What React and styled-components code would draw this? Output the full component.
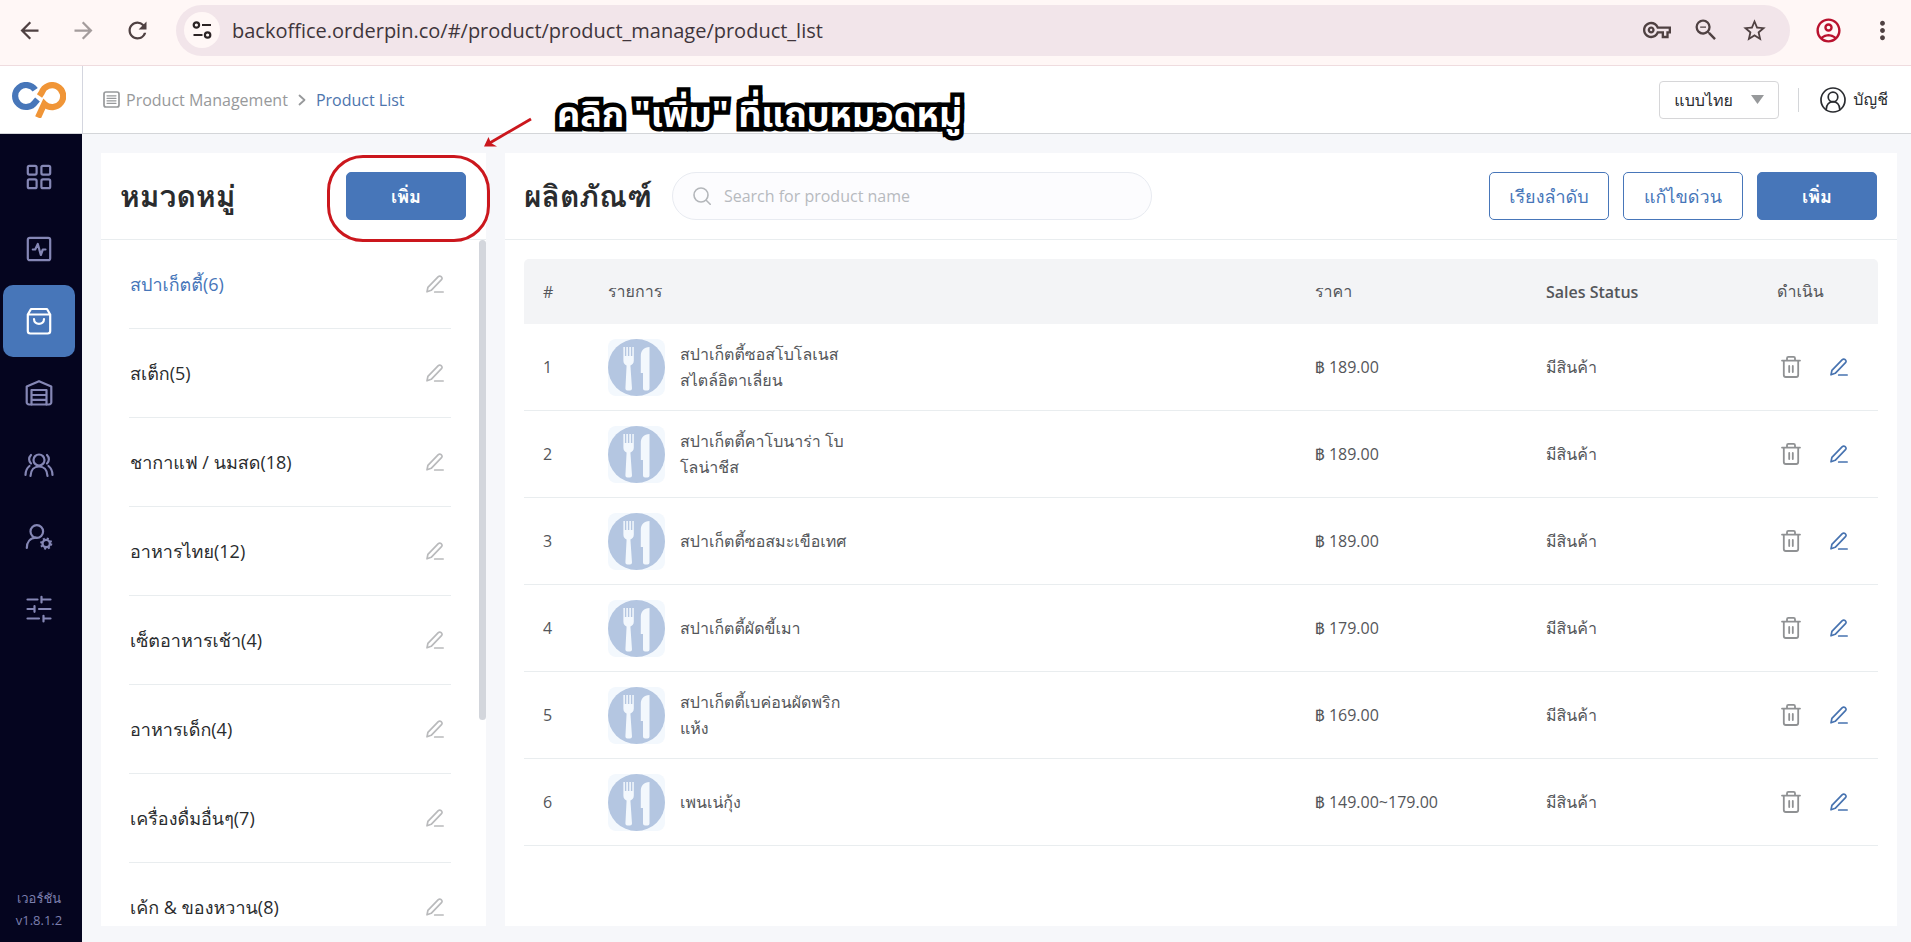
import React from 'react';
import styled, { createGlobalStyle, css } from 'styled-components';
import {
  MdArrowBack, MdArrowForward, MdRefresh, MdOutlineVpnKey, MdZoomOut,
  MdStarOutline, MdOutlineAccountCircle, MdMoreVert,
} from 'react-icons/md';

const BLUE = '#4776b9';
const LINE = '#e9edef';

const GlobalStyle = createGlobalStyle`
  *, *::before, *::after { box-sizing: border-box; }
  body {
    margin: 0;
    font-family: "Open Sans", Loma, "Noto Sans Thai Looped", sans-serif;
    font-size: 16px;
    color: #54565a;
  }
  button, input, select { font: inherit; color: inherit; }
  button { cursor: pointer; }
  h1, h2, p, ul { margin: 0; padding: 0; }
  ul { list-style: none; }
  svg { display: block; flex: none; }
`;

const Page = styled.div`
  display: flex;
  flex-direction: column;
  height: 100vh;
  min-height: 600px;
  overflow: hidden;
`;

/* ---------- browser bar ---------- */

const BrowserBar = styled.header`
  display: flex;
  align-items: center;
  flex: none;
  height: 66px;
  padding: 0 14px 5px 16px;
  gap: 14px;
  background: #fff7f6;
  border-bottom: 1px solid #efdcdf;
`;

const NavButtons = styled.div`
  display: flex;
  gap: 27px;
  margin-right: 11px;
`;

const PlainButton = styled.button`
  display: grid;
  place-items: center;
  padding: 0;
  border: 0;
  background: none;
  color: ${(p) => p.$color || '#4f4142'};
`;

const AddressBar = styled.div`
  display: flex;
  align-items: center;
  flex: 1;
  height: 51px;
  padding: 0 22px 0 8px;
  border-radius: 26px;
  background: #f2e5ea;
`;

const SiteChip = styled.button`
  display: grid;
  place-items: center;
  width: 36px;
  height: 36px;
  padding: 0;
  border: 0;
  border-radius: 50%;
  background: #fff7f6;
  color: #2b2324;
`;

const Address = styled.input`
  flex: 1;
  min-width: 0;
  margin-left: 12px;
  padding: 0;
  border: 0;
  outline: 0;
  background: none;
  font-size: 20px;
  color: #40353b;
`;

const AddressIcons = styled.div`
  display: flex;
  align-items: center;
  gap: 21px;
`;

const ProfileIcons = styled.div`
  display: flex;
  align-items: center;
  gap: 25px;
  padding-left: 10px;
`;

/* ---------- application header ---------- */

const AppHeader = styled.header`
  display: flex;
  flex: none;
  height: 68px;
  background: #fff;
  border-bottom: 1px solid #d4d6d9;
`;

const LogoBox = styled.a`
  display: flex;
  align-items: center;
  justify-content: center;
  width: 83px;
  padding-right: 4px;
  border-right: 1px solid #d4d6df;
`;

const HeaderBody = styled.div`
  display: flex;
  align-items: center;
  flex: 1;
  padding: 0 23px 0 20px;
`;

const Breadcrumb = styled.nav`
  display: flex;
  align-items: center;
  flex: 1;
  font-size: 16px;
  color: #97999b;
`;

const Crumb = styled.a`
  margin-left: ${(p) => (p.$current ? 8 : 6)}px;
  margin-right: ${(p) => (p.$current ? 0 : 8)}px;
  color: ${(p) => (p.$current ? '#4d75ad' : 'inherit')};
  text-decoration: none;
`;

const LanguageBox = styled.div`
  display: flex;
  align-items: center;
  position: relative;
  width: 120px;
  height: 38px;
  border: 1px solid #d6d6d8;
  border-radius: 4px;

  svg { position: absolute; right: 14px; pointer-events: none; }
`;

const LanguageSelect = styled.select`
  appearance: none;
  width: 100%;
  height: 100%;
  padding: 0 32px 0 14px;
  border: 0;
  background: none;
  color: #2a2c30;
`;

const Divider = styled.span`
  width: 1px;
  height: 24px;
  margin: 0 21px 0 19px;
  background: #d4d6d9;
`;

const Account = styled.button`
  display: flex;
  align-items: center;
  gap: 7px;
  padding: 0;
  border: 0;
  background: none;
  color: #2a2c30;
`;

/* ---------- side bar ---------- */

const Body = styled.div`
  display: flex;
  flex: 1;
  min-height: 0;
`;

const SideBar = styled.nav`
  display: flex;
  flex-direction: column;
  flex: none;
  width: 82px;
  padding: 7px 7px 11px 3px;
  background: #05051f;
`;

const SideItem = styled.a`
  display: grid;
  place-items: center;
  height: 72px;
  border-radius: 10px;
  color: ${(p) => (p.$active ? '#fff' : '#8587b5')};
  background: ${(p) => (p.$active ? BLUE : 'none')};
`;

const Version = styled.p`
  margin-top: auto;
  text-align: center;
  font-size: 13px;
  line-height: 22px;
  color: #7c7fae;
`;

/* ---------- panels ---------- */

const Main = styled.main`
  display: flex;
  flex: 1;
  min-width: 0;
  gap: 19px;
  padding: 19px 14px 16px 19px;
  background: #f6f7fa;
`;

const Panel = styled.section`
  display: flex;
  flex-direction: column;
  min-width: 0;
  min-height: 0;
  background: #fff;
  ${(p) => (p.$wide ? css`flex: 1;` : css`flex: none; width: 385px;`)}
`;

const PanelHeader = styled.div`
  display: flex;
  align-items: center;
  flex: none;
  gap: 14px;
  height: 87px;
  padding: 0 20px 0 19px;
  border-bottom: 1px solid ${LINE};
`;

const Title = styled.h2`
  font-size: 30px;
  font-weight: 700;
  line-height: 40px;
  white-space: nowrap;
  color: #2a2c2e;
`;

const Spacer = styled.div`
  flex: 1;
`;

const Button = styled.button`
  width: 120px;
  height: 48px;
  padding: 0;
  border: 1px solid ${BLUE};
  border-radius: 5px;
  font-size: 18px;
  font-weight: ${(p) => (p.$primary ? 700 : 400)};
  background: ${(p) => (p.$primary ? BLUE : '#fff')};
  color: ${(p) => (p.$primary ? '#fff' : BLUE)};
`;

const SearchBox = styled.label`
  display: flex;
  align-items: center;
  gap: 13px;
  width: 480px;
  height: 48px;
  margin-left: 6px;
  padding: 0 20px;
  border: 1px solid #e8ebf1;
  border-radius: 24px;
  background: #fcfcfe;
  color: #b3b6ba;
`;

const SearchInput = styled.input`
  flex: 1;
  min-width: 0;
  padding: 0;
  border: 0;
  outline: 0;
  background: none;
  &::placeholder { color: #b7babe; opacity: 1; }
`;

const ListArea = styled.div`
  display: flex;
  flex: 1;
  min-height: 0;
`;

const CategoryList = styled.ul`
  flex: 1;
  overflow: hidden;
  padding: 0 28px;
`;

const Category = styled.li`
  display: flex;
  align-items: center;
  justify-content: space-between;
  height: 89px;
  padding-right: 7px;
  padding-left: 1px;
  border-bottom: 1px solid ${LINE};
  font-size: 18px;
  color: ${(p) => (p.$active ? BLUE : '#2a2c2e')};
`;

const ScrollThumb = styled.div`
  flex: none;
  width: 7px;
  height: 70%;
  border-radius: 4px;
  background: #d3d6dc;
`;

/* ---------- product table ---------- */

const TableArea = styled.div`
  padding: 19px;
`;

const Table = styled.table`
  width: 100%;
  table-layout: fixed;
  border-spacing: 0;
  text-align: left;
`;

const HeadCell = styled.th`
  width: ${(p) => (p.$width ? `${p.$width}px` : 'auto')};
  height: 65px;
  padding: 0 19px;
  background: #f3f4f6;
  font-weight: ${(p) => (p.$strong ? 600 : 400)};
  font-size: 16px;
  &:first-child { border-radius: 5px 0 0 0; }
  &:last-child { border-radius: 0 5px 0 0; }
`;

const Cell = styled.td`
  height: 87px;
  padding: 0 19px;
  border-bottom: 1px solid ${LINE};
`;

const Product = styled.div`
  display: flex;
  align-items: center;
  gap: 15px;
`;

const Thumb = styled.span`
  border-radius: 8px;
  background: #f3f8fd;
`;

const ProductName = styled.span`
  width: 180px;
  line-height: 26px;
  white-space: pre-line;
`;

const Actions = styled.div`
  display: flex;
  align-items: center;
  gap: 27px;
  padding-left: 2px;
`;

/* ---------- tutorial marks over the page ---------- */

const Highlight = styled.div`
  position: absolute;
  top: 155px;
  left: 327px;
  width: 163px;
  height: 87px;
  border: 3px solid #cb171d;
  border-radius: 36px;
  pointer-events: none;
`;

const Arrow = styled.svg`
  position: absolute;
  top: 116px;
  left: 480px;
  pointer-events: none;
`;

const Callout = styled.p`
  position: absolute;
  top: 86px;
  left: 557px;
  font-family: "Noto Sans Thai", sans-serif;
  font-size: 36px;
  font-weight: 700;
  line-height: 60px;
  white-space: nowrap;
  color: #fff;
  -webkit-text-stroke: 9px #000;
  paint-order: stroke fill;
  stroke-linejoin: round;
  pointer-events: none;
`;

/* ---------- icons ---------- */

const Stroke = ({ size = 30, w = 2, box = 30, children }) => (
  <svg width={size} height={size} viewBox={`0 0 ${box} ${box}`} fill="none" stroke="currentColor"
    strokeWidth={w} strokeLinecap="round" strokeLinejoin="round" aria-hidden="true">{children}</svg>
);

const EditIcon = () => (
  <Stroke size={18} box={18} w={1.7}>
    <path d="M1 16.8 1.9 12.4 12.3 1.7a1.9 1.9 0 0 1 2.8-.1l.4.4a1.9 1.9 0 0 1 0 2.7L5.2 15.3 1 16.8Z" />
    <path d="M8.7 17h8.5" />
  </Stroke>
);

const TrashIcon = () => (
  <Stroke size={24} box={24} w={1.8}>
    <path d="M3 5.6h18M8 5.4V3.2a1.4 1.4 0 0 1 1.4-1.4h5.2A1.4 1.4 0 0 1 16 3.2v2.2" />
    <path d="M4.8 5.8V20a2 2 0 0 0 2 2h10.4a2 2 0 0 0 2-2V5.8M10.2 11v6M13.8 11v6" />
  </Stroke>
);

const SiteIcon = () => (
  <svg width="20" height="18" viewBox="0 0 20 18" fill="none" stroke="currentColor" strokeWidth="2.2">
    <circle cx="4.4" cy="4" r="2.7" /><path d="M10 4h9M1.5 14h9" /><circle cx="15.6" cy="14" r="2.7" />
  </svg>
);

const Logo = () => (
  <svg width="54" height="36" viewBox="0 0 54 36" fill="none" strokeWidth="6.2" aria-hidden="true">
    <path d="M23.2 7.8A11 11 0 1 0 23.200 20.200L25.500 17.500" stroke="#4776b9" />
    <path d="M26 35.500 32.300 21.800A11 11 0 1 0 29.800 10.500L27.500 14" stroke="#f09537" />
  </svg>
);

const CutleryIcon = () => (
  <svg width="57" height="57" viewBox="0 0 57 57" aria-hidden="true">
    <circle cx="28.5" cy="28.5" r="28.5" fill="#b4c6e1" />
    <g fill="#f3f8fd">
      <path d="M15.4 8h1.5v9h1.4V8h1.6v9h1.4V8h1.6v9h1.4V8h1.5v13.5c0 3-1.6 4.3-3.4 5L24 49.5a2 2 0 0 1-2 2h-2.600a2 2 0 0 1-2-2l1.200-23c-1.800-.7-3.200-2-3.200-5Z" />
      <path d="M41.500 8v41.500a2 2 0 0 1-2 2H37a2 2 0 0 1-2-2V34h-2.200V17c0-5.500 3.200-9 8.700-9Z" />
    </g>
  </svg>
);

const BreadcrumbIcon = () => (
  <Stroke size={17} box={17} w={1.7}>
    <rect x="1" y="1" width="15" height="15" rx="2" />
    <path d="M4 4.800h9M4 7.300h9M4 9.800h9M4 12.300h9" strokeWidth="1.200" />
  </Stroke>
);

const UserIcon = () => (
  <Stroke size={26} box={26} w={1.7}>
    <circle cx="13" cy="13" r="12" /><circle cx="13" cy="10" r="4.800" />
    <path d="M6.200 22.500c0-4.800 3-7.800 6.800-7.800s6.800 3 6.800 7.800" />
  </Stroke>
);

const SIDE_ITEMS = [
  { label: 'Dashboard', icon: (
    <>
      <rect x="3.800" y="3.800" width="8.800" height="8.800" rx="1.500" /><rect x="17.400" y="3.800" width="8.800" height="8.800" rx="1.500" />
      <rect x="3.800" y="17.400" width="8.800" height="8.800" rx="1.500" /><rect x="17.400" y="17.400" width="8.800" height="8.800" rx="1.500" />
    </>
  ) },
  { label: 'Reports', icon: (
    <><rect x="3.800" y="3.800" width="22.400" height="22.400" rx="2" /><path d="M8.800 15.500h2.400L13.800 10l3 11 2-5.500h2.700" /></>
  ) },
  { label: 'Products', active: true, icon: (
    <>
      <path d="M3.800 8.500 7 3h16l3.200 5.500V25a2.500 2.500 0 0 1-2.500 2.500H6.300A2.500 2.500 0 0 1 3.800 25ZM4 8.500h22" />
      <path d="M10 13c0 6.500 10 6.500 10 0" />
    </>
  ) },
  { label: 'Stock', icon: (
    <>
      <path d="M7.500 26.500h-2.500a2.300 2.300 0 0 1-2.300-2.300V8.500L15 3.200l12.300 5.300v15.700a2.300 2.300 0 0 1-2.300 2.300h-2.500" />
      <path d="M7.500 26.500V12h15v14.500ZM7.500 17h15M7.500 21.800h15" />
    </>
  ) },
  { label: 'Customers', icon: (
    <>
      <circle cx="15" cy="10" r="5.500" />
      <path d="M6.500 26c.3-6.500 4-9.500 8.500-9.500s8.200 3 8.500 9.500M7 5c-2.500 2.500-2.500 6 0 8.500M5.500 16c-2.500 2-4 5-4 9M23 5c2.500 2.500 2.500 6 0 8.500M24.500 16c2.500 2 4 5 4 9" />
    </>
  ) },
  { label: 'Staff', icon: (
    <>
      <circle cx="12.800" cy="9.500" r="6.300" /><path d="M2.800 26c0-6 3.500-10 9-10.300" />
      <circle cx="22.200" cy="21.600" r="3.700" strokeWidth="2.400" />
      <circle cx="22.200" cy="21.600" r="5.200" strokeWidth="1.800" strokeDasharray="2 2.084" strokeLinecap="butt" />
    </>
  ) },
  { label: 'Settings', icon: (
    <path d="M3.500 5.500h10M18 5.500h8.500M17.500 2.800v5.600M3.500 15H10M10.500 12.200v5.600M15 15h11.500M3.500 24.500H15M19.500 24.500h7M19.500 21.800v5.600" />
  ) },
];

const CATEGORIES = [
  'สปาเก็ตตี้(6)', 'สเต็ก(5)', 'ชากาแฟ / นมสด(18)', 'อาหารไทย(12)',
  'เซ็ตอาหารเช้า(4)', 'อาหารเด็ก(4)', 'เครื่องดื่มอื่นๆ(7)', 'เค้ก & ของหวาน(8)',
];

const PRODUCTS = [
  { name: 'สปาเก็ตตี้ซอสโบโลเนส\nสไตล์อิตาเลี่ยน', price: '฿ 189.00' },
  { name: 'สปาเก็ตตี้คาโบนาร่า โบ\nโลน่าชีส', price: '฿ 189.00' },
  { name: 'สปาเก็ตตี้ซอสมะเขือเทศ', price: '฿ 189.00' },
  { name: 'สปาเก็ตตี้ผัดขี้เมา', price: '฿ 179.00' },
  { name: 'สปาเก็ตตี้เบค่อนผัดพริก\nแห้ง', price: '฿ 169.00' },
  { name: 'เพนเน่กุ้ง', price: '฿ 149.00~179.00' },
];

export default function App() {
  return (
    <Page>
      <GlobalStyle />
      <BrowserBar>
        <NavButtons>
          <PlainButton aria-label="Back"><MdArrowBack size={27} /></PlainButton>
          <PlainButton aria-label="Forward" $color="#a49c9c"><MdArrowForward size={27} /></PlainButton>
          <PlainButton aria-label="Reload"><MdRefresh size={27} /></PlainButton>
        </NavButtons>
        <AddressBar>
          <SiteChip aria-label="Site information"><SiteIcon /></SiteChip>
          <Address aria-label="Address" defaultValue="backoffice.orderpin.co/#/product/product_manage/product_list" />
          <AddressIcons>
            <PlainButton aria-label="Passwords"><MdOutlineVpnKey size={28} /></PlainButton>
            <PlainButton aria-label="Zoom"><MdZoomOut size={28} /></PlainButton>
            <PlainButton aria-label="Bookmark"><MdStarOutline size={27} /></PlainButton>
          </AddressIcons>
        </AddressBar>
        <ProfileIcons>
          <PlainButton aria-label="Profile" $color="#b9122e"><MdOutlineAccountCircle size={29} /></PlainButton>
          <PlainButton aria-label="Menu"><MdMoreVert size={29} /></PlainButton>
        </ProfileIcons>
      </BrowserBar>

      <AppHeader>
        <LogoBox href="#" aria-label="OrderPin"><Logo /></LogoBox>
        <HeaderBody>
          <Breadcrumb>
            <BreadcrumbIcon />
            <Crumb href="#">Product Management</Crumb>
            <Stroke size={12} box={12} w={1.8}><path d="M3.500 1.500 8.500 6l-5 4.500" /></Stroke>
            <Crumb href="#" $current>Product List</Crumb>
          </Breadcrumb>
          <LanguageBox>
            <LanguageSelect aria-label="Language"><option>แบบไทย</option></LanguageSelect>
            <svg width="13" height="9" viewBox="0 0 13 9"><path d="M0 0h13L6.500 9Z" fill="#97999b" /></svg>
          </LanguageBox>
          <Divider />
          <Account><UserIcon />บัญชี</Account>
        </HeaderBody>
      </AppHeader>

      <Body>
        <SideBar>
          {SIDE_ITEMS.map((item) => (
            <SideItem key={item.label} href="#" aria-label={item.label} $active={item.active}>
              <Stroke w={2.2}>{item.icon}</Stroke>
            </SideItem>
          ))}
          <Version>เวอร์ชัน<br />v1.8.1.2</Version>
        </SideBar>

        <Main>
          <Panel>
            <PanelHeader>
              <Title>หมวดหมู่</Title>
              <Spacer />
              <Button $primary>เพิ่ม</Button>
            </PanelHeader>
            <ListArea>
              <CategoryList>
                {CATEGORIES.map((name, i) => (
                  <Category key={name} $active={i === 0}>
                    {name}
                    <PlainButton aria-label="Edit category" $color="#b9babc"><EditIcon /></PlainButton>
                  </Category>
                ))}
              </CategoryList>
              <ScrollThumb />
            </ListArea>
          </Panel>

          <Panel $wide>
            <PanelHeader>
              <Title>ผลิตภัณฑ์</Title>
              <SearchBox>
                <Stroke size={18} box={18} w={1.6}><circle cx="8" cy="8" r="7" /><path d="m13.200 13.200 4 4" /></Stroke>
                <SearchInput aria-label="Search" placeholder="Search for product name" />
              </SearchBox>
              <Spacer />
              <Button>เรียงลำดับ</Button>
              <Button>แก้ไขด่วน</Button>
              <Button $primary>เพิ่ม</Button>
            </PanelHeader>
            <TableArea>
              <Table>
                <thead>
                  <tr>
                    <HeadCell $width={65}>#</HeadCell>
                    <HeadCell>รายการ</HeadCell>
                    <HeadCell $width={231}>ราคา</HeadCell>
                    <HeadCell $width={231} $strong>Sales Status</HeadCell>
                    <HeadCell $width={120}>ดำเนิน</HeadCell>
                  </tr>
                </thead>
                <tbody>
                  {PRODUCTS.map((product, i) => (
                    <tr key={product.name}>
                      <Cell>{i + 1}</Cell>
                      <Cell>
                        <Product>
                          <Thumb><CutleryIcon /></Thumb>
                          <ProductName>{product.name}</ProductName>
                        </Product>
                      </Cell>
                      <Cell>{product.price}</Cell>
                      <Cell>มีสินค้า</Cell>
                      <Cell>
                        <Actions>
                          <PlainButton aria-label="Delete" $color="#8f9193"><TrashIcon /></PlainButton>
                          <PlainButton aria-label="Edit" $color="#4773b0"><EditIcon /></PlainButton>
                        </Actions>
                      </Cell>
                    </tr>
                  ))}
                </tbody>
              </Table>
            </TableArea>
          </Panel>
        </Main>
      </Body>

      <Highlight />
      <Arrow width="56" height="42" viewBox="0 0 56 42" fill="none" stroke="#cb171d" strokeWidth="2.800">
        <path d="M51 3 8 28" /><path d="M4 30.500 8.500 21l2.500 6 6 3.500Z" fill="#cb171d" stroke="none" />
      </Arrow>
      <Callout>คลิก "เพิ่ม" ที่แถบหมวดหมู่</Callout>
    </Page>
  );
}
